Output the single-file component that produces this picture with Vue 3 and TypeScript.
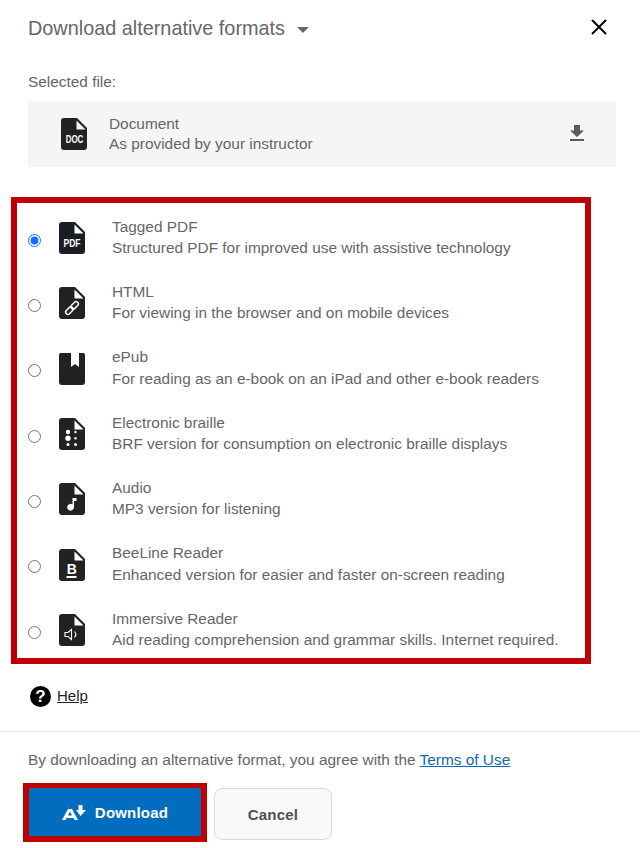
<script setup lang="ts">
type FormatKey = "pdf" | "html" | "epub" | "braille" | "audio" | "beeline" | "immersive";

type FormatOption = {
    key: FormatKey;
    title: string;
    description: string;
};

const formats: FormatOption[] = [
    { key: "pdf", title: "Tagged PDF", description: "Structured PDF for improved use with assistive technology" },
    { key: "html", title: "HTML", description: "For viewing in the browser and on mobile devices" },
    { key: "epub", title: "ePub", description: "For reading as an e-book on an iPad and other e-book readers" },
    { key: "braille", title: "Electronic braille", description: "BRF version for consumption on electronic braille displays" },
    { key: "audio", title: "Audio", description: "MP3 version for listening" },
    { key: "beeline", title: "BeeLine Reader", description: "Enhanced version for easier and faster on-screen reading" },
    { key: "immersive", title: "Immersive Reader", description: "Aid reading comprehension and grammar skills. Internet required." },
];

// Shared file silhouette with the folded corner cut out
const filePath = "M3 0H16L26 10V29a3 3 0 0 1-3 3H3a3 3 0 0 1-3-3V3a3 3 0 0 1 3-3Z";
const foldPath = "M15.5 2.5L24.5 11.5H15.5Z";
</script>

<template>
    <div class="panel">
        <header class="panel__header">
            <h1 class="panel__title">Download alternative formats</h1>
            <span class="panel__caret" />
            <svg class="panel__close" width="16" height="16" viewBox="0 0 16 16">
                <path d="M1 1L15 15M15 1L1 15" stroke="#000" stroke-width="2" fill="none" />
            </svg>
        </header>

        <p class="panel__label">Selected file:</p>

        <div class="selected">
            <svg class="file-icon" width="26" height="32" viewBox="0 0 26 32">
                <path :d="filePath" fill="#222" />
                <path :d="foldPath" fill="#f5f5f5" />
                <text transform="translate(13.5 25.4) scale(0.76 1)" text-anchor="middle" class="file-icon__label file-icon__label--doc">DOC</text>
            </svg>
            <div class="selected__text">
                <div>Document</div>
                <div>As provided by your instructor</div>
            </div>
            <svg class="selected__action" width="14" height="16" viewBox="0 0 14 16">
                <path d="M4 0H10V5.5H14L7 12L0 5.5H4Z" fill="#5c5c5c" />
                <rect y="14" width="14" height="2" fill="#5c5c5c" />
            </svg>
        </div>

        <div class="formats">
            <label v-for="(format, index) in formats" :key="format.key" class="format">
                <input class="format__radio" type="radio" name="format" :checked="index === 0" />
                <svg class="file-icon" width="26" height="32" viewBox="0 0 26 32">
                    <template v-if="format.key === 'epub'">
                        <path d="M2 0H12V14L16 11L20 14V0H24a2 2 0 0 1 2 2V29a3 3 0 0 1-3 3H3a3 3 0 0 1-3-3V2a2 2 0 0 1 2-2Z" fill="#222" />
                    </template>
                    <template v-else>
                        <path :d="filePath" :fill="format.key === 'pdf' ? '#1a1d24' : '#222'" />
                        <path :d="foldPath" fill="#fff" />
                    </template>

                    <text v-if="format.key === 'pdf'" transform="translate(13 25) scale(0.85 1)" text-anchor="middle" class="file-icon__label">PDF</text>

                    <g v-if="format.key === 'html'" stroke="#fff" stroke-width="1.5" fill="none" transform="rotate(-45 13 21)">
                        <rect x="5" y="18.8" width="8.5" height="4.4" rx="2.2" />
                        <rect x="12.5" y="18.8" width="8.5" height="4.4" rx="2.2" />
                    </g>

                    <g v-if="format.key === 'braille'" fill="#fff">
                        <circle cx="9" cy="14" r="2.2" />
                        <circle cx="9" cy="20.3" r="2.7" />
                        <circle cx="9" cy="26.5" r="1.5" />
                        <circle cx="16.5" cy="14" r="1.2" />
                        <circle cx="16.5" cy="20.3" r="1.2" />
                        <circle cx="16.5" cy="26.5" r="1.5" />
                    </g>

                    <path
                        v-if="format.key === 'audio'"
                        d="M13.5 15H17.5V18H15V24.2a3.4 3.4 0 1 1-1.5-2.8Z"
                        fill="#fff"
                    />

                    <g v-if="format.key === 'beeline'">
                        <text x="12.7" y="24.7" text-anchor="middle" class="file-icon__letter">B</text>
                        <rect x="7.5" y="27" width="10" height="2" fill="#fff" />
                    </g>

                    <g v-if="format.key === 'immersive'" stroke="#fff" stroke-width="1.1" fill="none">
                        <path d="M6 18.5H9L12.5 15.5V25.5L9 22.5H6Z" />
                        <path d="M15.5 17.5a4.5 4.5 0 0 1 0 6" />
                    </g>
                </svg>
                <span class="format__text">
                    <span class="format__title">{{ format.title }}</span>
                    <span class="format__description">{{ format.description }}</span>
                </span>
            </label>
        </div>

        <div class="help">
            <span class="help__icon">?</span>
            <a class="help__link" href="#">Help</a>
        </div>

        <footer class="footer">
            <p class="footer__terms">
                By downloading an alternative format, you agree with the
                <a href="#">Terms of Use</a>
            </p>
            <div class="footer__actions">
                <button class="button button--primary" type="button">
                    <svg width="24" height="15" viewBox="0 0 24 15">
                        <path d="M0 15L6 4H10L16 15H12.5L11.5 13H4.5L3.5 15ZM6 10.5H10L8 6.5Z" fill="#fff" fill-rule="evenodd" />
                        <path d="M16.5 0H20.5V5H24L18.5 11L14 5H16.5Z" fill="#fff" />
                    </svg>
                    Download
                </button>
                <button class="button button--secondary" type="button">Cancel</button>
            </div>
        </footer>
    </div>
</template>

<style scoped>
    .panel {
        width: 640px;
        height: 848px;
        box-sizing: border-box;
        overflow: hidden;
        background-color: white;
        color: #666;
        font-family: "Liberation Sans", sans-serif;
        font-size: 15.4px;
    }

    .panel__header {
        display: flex;
        align-items: center;
        height: 56px;
        padding: 0 33px 0 28px;
    }

    .panel__title {
        margin: 0;
        font-size: 19.85px;
        font-weight: 400;
        color: #666;
    }

    .panel__caret {
        width: 0;
        height: 0;
        margin: 3px auto 0 12px;
        border-left: 6px solid transparent;
        border-right: 6px solid transparent;
        border-top: 6px solid #666;
    }

    .panel__close {
        margin-top: -2px;
    }

    .panel__label {
        margin: 16px 0 10px 28px;
        line-height: 19px;
    }

    .selected {
        display: flex;
        align-items: center;
        height: 66px;
        margin: 0 24px 0 28px;
        padding: 0 31px 0 33px;
        background-color: #f5f5f5;
    }

    .selected__text {
        flex: 1;
        margin-left: 22px;
        line-height: 20px;
    }

    .selected__action {
        flex: none;
        margin: -2px 1px 0 0;
    }

    .file-icon {
        flex: none;
    }

    .file-icon__label {
        font-family: "Liberation Sans", sans-serif;
        font-size: 10px;
        font-weight: 700;
        fill: white;
    }

    .file-icon__label--doc {
        font-size: 10.5px;
    }

    .file-icon__letter {
        font-family: "Liberation Sans", sans-serif;
        font-size: 14px;
        font-weight: 700;
        fill: white;
    }

    .formats {
        display: flex;
        flex-direction: column;
        width: 580px;
        box-sizing: border-box;
        margin: 30px 0 0 11px;
        padding: 4.5px 0 0 11px;
        height: 467px;
        border: 6px solid #c00000;
    }

    .format {
        display: flex;
        align-items: center;
        height: 65.33px;
        flex: none;
    }

    .format .file-icon {
        margin-top: -4px;
    }

    .format__radio {
        flex: none;
        width: 13px;
        height: 13px;
        margin: 0 18px 0 0;
        accent-color: #0f6fff;
    }

    .format__text {
        display: flex;
        flex-direction: column;
        margin: -5px 0 0 27px;
        line-height: 20.5px;
        white-space: nowrap;
    }

    .format__title {
        margin-bottom: 1px;
    }

    .help {
        display: flex;
        align-items: center;
        gap: 6px;
        margin: 22px 0 0 30px;
        height: 21px;
    }

    .help__icon {
        display: flex;
        align-items: center;
        justify-content: center;
        width: 21px;
        height: 21px;
        border-radius: 50%;
        background-color: black;
        color: white;
        font-size: 17px;
        font-weight: 700;
    }

    .help__link {
        margin-top: -2px;
        color: #222;
        font-size: 15px;
        text-decoration: underline;
    }

    .footer {
        margin-top: 24px;
        padding: 18px 0 0 28px;
        border-top: 1px solid #e4e4e7;
    }

    .footer__terms {
        margin: 0;
        line-height: 20px;
    }

    .footer__terms a {
        color: #0f6aab;
    }

    .footer__actions {
        display: flex;
        align-items: flex-start;
        gap: 7px;
        margin: 13px 0 0 -5px;
    }

    .button {
        display: flex;
        align-items: center;
        justify-content: center;
        gap: 9px;
        box-sizing: border-box;
        font-family: "Liberation Sans", sans-serif;
        font-size: 15px;
        font-weight: 700;
        letter-spacing: 0.2px;
    }

    .button--primary {
        width: 184px;
        height: 59px;
        padding-top: 2px;
        background-color: #006dbf;
        background-clip: padding-box;
        border: 6px solid #c00000;
        border-top-width: 5px;
        color: white;
    }

    .button--secondary {
        width: 118px;
        height: 52px;
        margin-top: 5px;
        background-color: #f8f9fb;
        border: 1px solid #d6dae3;
        border-radius: 8px;
        color: #4f4f4f;
    }
</style>
